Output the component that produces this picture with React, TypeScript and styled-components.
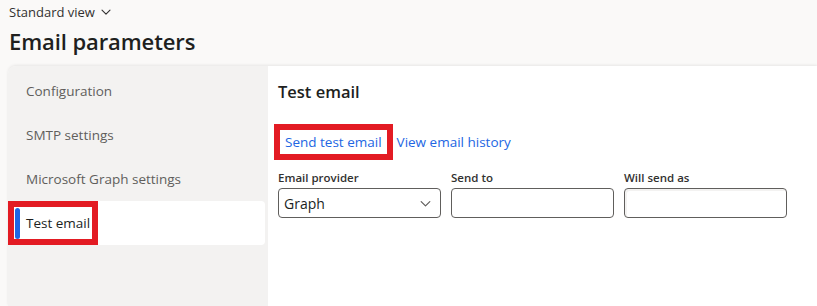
import {FC, ReactNode} from "react";
import styled, {createGlobalStyle} from "styled-components";

const GlobalStyle = createGlobalStyle`
	html, body {
		margin: 0;
		padding: 0;
		background: #faf9f8;
		font-family: "Segoe UI", "Open Sans", "Liberation Sans", sans-serif;
		color: #323130;
		overflow: hidden;
	}
`;

const Page = styled.div`
	height: 306px;
	display: flex;
	flex-direction: column;
`;

const Header = styled.header`
	padding: 2px 0 0 9px;
`;

const ViewSwitch = styled.button`
	display: flex;
	align-items: center;
	gap: 5px;
	padding: 0;
	border: none;
	background: none;
	font-family: inherit;
	font-size: 13px;
	color: #323130;
	height: 19px;
`;

const Title = styled.h1`
	margin: 5px 0 0;
	font-size: 22px;
	font-weight: 600;
	line-height: 30px;
	color: #201f1e;
	letter-spacing: -0.1px;
`;

const Card = styled.div`
	flex: 1;
	margin: 10px 0 0 8px;
	display: flex;
	border-radius: 8px 0 0 0;
	box-shadow: 0 -1px 3px rgba(0, 0, 0, 0.08);
	overflow: hidden;
`;

const Nav = styled.nav`
	width: 260px;
	flex-shrink: 0;
	background: #f3f2f1;
	padding-top: 3px;
	display: flex;
	flex-direction: column;
`;

const NavItem = styled.div<{$active?: boolean}>`
	height: 44px;
	margin-right: 3px;
	display: flex;
	align-items: center;
	padding-left: ${(p) => (p.$active ? "0" : "18px")};
	font-size: 13.5px;
	color: ${(p) => (p.$active ? "#201f1e" : "#605e5c")};
	background: ${(p) => (p.$active ? "#ffffff" : "transparent")};
	border-radius: 4px;
`;

const Highlight = styled.span`
	display: inline-flex;
	align-items: center;
	align-self: stretch;
	border: 6px solid #e31b23;
`;

const ActiveBar = styled.span`
	width: 5px;
	height: 31px;
	margin-left: 1px;
	border-radius: 3px;
	background: #1f66e5;
`;

const ActiveLabel = styled.span`
	margin: 0 2px 0 6px;
`;

const Content = styled.main`
	flex: 1;
	background: #ffffff;
	padding: 14px 0 0 10px;
`;

const SectionTitle = styled.h2`
	margin: 0;
	font-size: 16.5px;
	font-weight: 600;
	line-height: 24px;
	color: #201f1e;
`;

const Actions = styled.div`
	margin-top: 20px;
	display: flex;
	align-items: center;
	height: 36px;
	margin-left: -4px;
`;

const LinkBox = styled.span`
	display: inline-flex;
	align-items: center;
	height: 36px;
	box-sizing: border-box;
	border: 6px solid #e31b23;
	padding: 0 5px 0 5px;
`;

const Link = styled.a`
	font-size: 13.5px;
	color: #2266e3;
	text-decoration: none;
	cursor: pointer;
`;

const PlainLink = styled(Link)`
	margin-left: 4px;
`;

const Fields = styled.div`
	margin-top: 10px;
	display: grid;
	grid-template-columns: repeat(3, 163px);
	column-gap: 10px;
`;

const Field = styled.div`
	display: flex;
	flex-direction: column;
`;

const Label = styled.label`
	font-size: 11.5px;
	font-weight: 600;
	line-height: 16px;
	color: #323130;
	margin-bottom: 2px;
`;

const InputBox = styled.div<{$readOnly?: boolean}>`
	height: 30px;
	box-sizing: border-box;
	border: 1px solid #605e5c;
	border-radius: 4px;
	background: #ffffff;
	display: flex;
	align-items: center;
	padding: 0 8px 0 5px;
	font-size: 14px;
	color: #201f1e;
	box-shadow: ${(p) => (p.$readOnly ? "inset 2px 2px 0 #f3f2f1" : "none")};
`;

const Value = styled.span`
	flex: 1;
`;

const Chevron: FC<{size?: number; color?: string}> = ({size = 12, color = "#323130"}) => (
	<svg width={size} height={size} viewBox="0 0 12 12" fill="none">
		<path d="M2 4.2 L6 8.2 L10 4.2" stroke={color} strokeWidth="1.1" strokeLinecap="round" strokeLinejoin="round" />
	</svg>
);

const navItems = ["Configuration", "SMTP settings", "Microsoft Graph settings"];

const TextField: FC<{label: string; children?: ReactNode; readOnly?: boolean}> = ({label, children, readOnly}) => (
	<Field>
		<Label>{label}</Label>
		<InputBox $readOnly={readOnly}>{children}</InputBox>
	</Field>
);

const App: FC = () => {
	return (
		<Page>
			<GlobalStyle />
			<Header>
				<ViewSwitch>
					Standard view
					<Chevron size={12} />
				</ViewSwitch>
				<Title>Email parameters</Title>
			</Header>
			<Card>
				<Nav>
					{navItems.map((item) => (
						<NavItem key={item}>{item}</NavItem>
					))}
					<NavItem $active>
						<Highlight>
							<ActiveBar />
							<ActiveLabel>Test email</ActiveLabel>
						</Highlight>
					</NavItem>
				</Nav>
				<Content>
					<SectionTitle>Test email</SectionTitle>
					<Actions>
						<LinkBox>
							<Link>Send test email</Link>
						</LinkBox>
						<PlainLink>View email history</PlainLink>
					</Actions>
					<Fields>
						<TextField label="Email provider">
							<Value>Graph</Value>
							<Chevron size={13} color="#605e5c" />
						</TextField>
						<TextField label="Send to" />
						<TextField label="Will send as" readOnly />
					</Fields>
				</Content>
			</Card>
		</Page>
	);
};

export default App;
